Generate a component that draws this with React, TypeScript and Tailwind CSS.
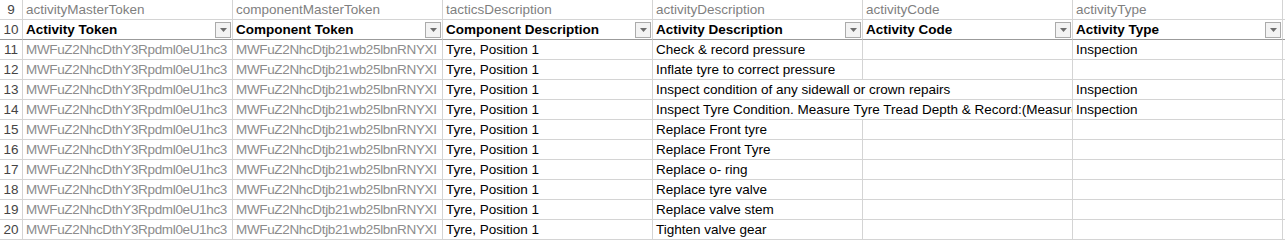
import React from 'react';

const font = { fontFamily: '"Liberation Sans", Arial, sans-serif' };

const token1 = 'MWFuZ2NhcDthY3Rpdml0eU1hc3';
const token2 = 'MWFuZ2NhcDtjb21wb25lbnRNYXI';

const fieldNames = [
  'activityMasterToken',
  'componentMasterToken',
  'tacticsDescription',
  'activityDescription',
  'activityCode',
  'activityType',
];

const headers = [
  'Activity Token',
  'Component Token',
  'Component Description',
  'Activity Description',
  'Activity Code',
  'Activity Type',
];

// wide = description spills over the empty Activity Code cell
const rows: { n: number; desc: string; type: string; wide?: boolean }[] = [
  { n: 11, desc: 'Check & record pressure', type: 'Inspection' },
  { n: 12, desc: 'Inflate tyre to correct pressure', type: '' },
  { n: 13, desc: 'Inspect condition of any sidewall or crown repairs', type: 'Inspection', wide: true },
  { n: 14, desc: 'Inspect Tyre Condition. Measure Tyre Tread Depth & Record:(Measure Tread Depth in mm)', type: 'Inspection', wide: true },
  { n: 15, desc: 'Replace Front tyre', type: '' },
  { n: 16, desc: 'Replace Front Tyre', type: '' },
  { n: 17, desc: 'Replace o- ring', type: '' },
  { n: 18, desc: 'Replace tyre valve', type: '' },
  { n: 19, desc: 'Replace valve stem', type: '' },
  { n: 20, desc: 'Tighten valve gear', type: '' },
];

const cell = 'h-5 border-r border-b border-[#d4d4d4] pl-[3px] whitespace-nowrap overflow-hidden leading-[19px]';
const tokenCell = `${cell} text-[#8c8c8c] tracking-[-0.35px]`;

// Row number cell on the left edge
const RowNum: React.FC<{ n: number; dark?: boolean }> = ({ n, dark }) => (
  <div
    className={`h-5 border-r border-b border-[#d4d4d4] text-center text-[#444] leading-[19px] ${
      dark ? 'border-b-[#9b9b9b]' : ''
    }`}
  >
    {n}
  </div>
);

const FilterButton = () => (
  <div className="absolute right-[1px] top-[2px] w-4 h-4 border border-[#ababab] bg-[#f3f3f3] flex items-center justify-center">
    <svg width="7" height="4" viewBox="0 0 7 4">
      <path d="M0 0h7L3.5 4z" fill="#6d6d6d" />
    </svg>
  </div>
);

export default function App() {
  return (
    <div
      className="w-[1285px] h-[242px] overflow-hidden bg-white text-[13.5px] text-black"
      style={font}
    >
      <div className="grid grid-cols-[23px_repeat(6,210px)_2px]">
        {/* row 9: field names */}
        <RowNum n={9} />
        {fieldNames.map((f) => (
          <div key={f} className={`${cell} text-[#7f7f7f]`}>
            {f}
          </div>
        ))}
        <div className="h-5 border-b border-[#d4d4d4]" />

        {/* row 10: table header */}
        <RowNum n={10} dark />
        {headers.map((h) => (
          <div
            key={h}
            className={`${cell} relative font-bold border-b-[#9b9b9b]`}
          >
            {h}
            <FilterButton />
          </div>
        ))}
        <div className="h-5 border-b border-[#9b9b9b]" />

        {rows.map((r) => (
          <React.Fragment key={r.n}>
            <RowNum n={r.n} />
            <div className={tokenCell}>{token1}</div>
            <div className={tokenCell}>{token2}</div>
            <div className={cell}>Tyre, Position 1</div>
            {r.wide ? (
              <div className={`${cell} col-span-2`}>{r.desc}</div>
            ) : (
              <>
                <div className={cell}>{r.desc}</div>
                <div className={cell}></div>
              </>
            )}
            <div className={cell}>{r.type}</div>
            <div className="h-5 border-b border-[#d4d4d4]" />
          </React.Fragment>
        ))}
      </div>
    </div>
  );
}
